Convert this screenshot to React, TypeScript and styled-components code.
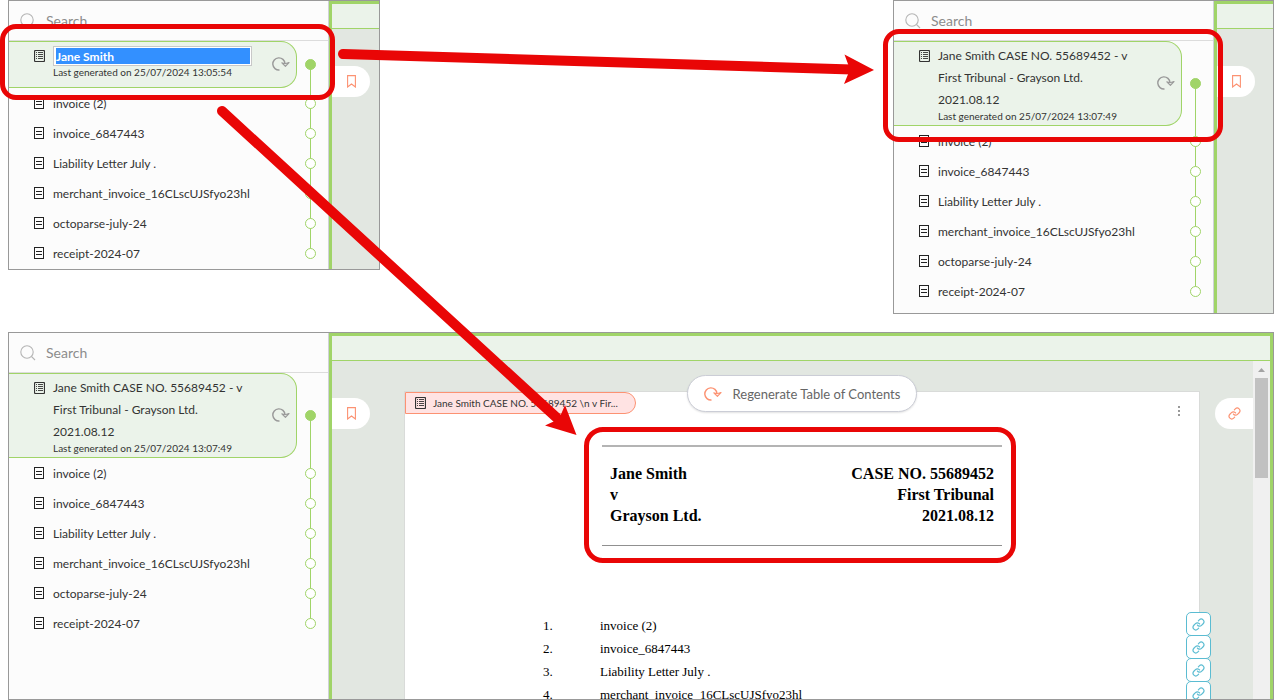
import React from "react";
import styled, { createGlobalStyle, css } from "styled-components";

const GREEN = "#a0d468";
const RED = "#e90606";
const UI_FONT = 'Lato, "Open Sans", sans-serif';

const GlobalStyle = createGlobalStyle`
  *, *::before, *::after { box-sizing: border-box; }
  body { margin: 0; background: #fff; font-family: ${UI_FONT}; font-size: 12px; color: #333; }
  button, input { font: inherit; color: inherit; }
  ul, ol { list-style: none; margin: 0; padding: 0; }
  svg { display: block; }
`;

const Page = styled.main`
  position: relative;
  display: flex;
  flex-direction: column;
  gap: 18px;
  height: 100vh;
  min-height: 600px;
  padding-left: 8px;
  overflow: hidden;
`;

const TopRow = styled.div`
  display: flex;
  justify-content: space-between;
  align-items: flex-start;
`;

const Panel = styled.section<{ $grow?: boolean; $main?: number }>`
  position: relative;
  display: grid;
  grid-template-columns: 320px ${(p) => (p.$main ? `${p.$main}px` : "minmax(0, 1fr)")};
  border: 1px solid #999;
  ${(p) =>
    p.$grow &&
    css`
      flex: 1;
      min-height: 0;
      grid-template-rows: minmax(0, 1fr);
    `}
`;

const Sidebar = styled.aside<{ $end: number }>`
  border-right: 1px solid #cfd1d8;
  background: #fcfcfc;
  padding-bottom: ${(p) => p.$end}px;
`;

const SearchRow = styled.label`
  display: flex;
  align-items: center;
  gap: 10px;
  height: 40px;
  padding-left: 11px;
  border-bottom: 1px solid #dcdcdc;
`;

const SearchInput = styled.input`
  width: 200px;
  border: 0;
  padding: 0;
  outline: 0;
  background: transparent;
  font-size: 14px;
  line-height: 20px;
  &::placeholder { color: #8c8c8c; opacity: 1; }
`;

const Entry = styled.li`
  display: flex;
`;

const Track = styled.span<{ $card?: boolean; $last?: boolean }>`
  position: relative;
  display: flex;
  align-items: center;
  justify-content: center;
  width: 27px;
  padding-top: ${(p) => (p.$card ? 0 : 1)}px;
  &::before {
    content: "";
    position: absolute;
    left: 13px;
    top: ${(p) => (p.$card ? "50%" : "0")};
    bottom: ${(p) => (p.$last ? "50%" : "0")};
    width: 1px;
    background: ${GREEN};
  }
`;

const Dot = styled.span<{ $filled?: boolean }>`
  position: relative;
  width: 11px;
  height: 11px;
  border: 1px solid ${GREEN};
  border-radius: 50%;
  background: ${(p) => (p.$filled ? GREEN : "#fff")};
`;

const Card = styled.div`
  display: flex;
  width: 288px;
  min-height: 47px;
  padding: 3px 6px 4px 25px;
  border: 1px solid ${GREEN};
  border-left: 0;
  border-radius: 0 16px 16px 0;
  background: #ebf3ea;
`;

const CardIcon = styled.span`
  width: 19px;
  padding-top: 5px;
`;

const CardBody = styled.div`
  width: 206px;
  flex: none;
  margin-right: auto;
`;

const CardTitle = styled.div`
  width: 200px;
  line-height: 22px;
`;

const Stamp = styled.div`
  font-size: 10px;
  line-height: 10px;
`;

const RenameInput = styled.input`
  display: block;
  width: 199px;
  height: 20px;
  margin: 1px 0;
  padding: 1px 1px 1px 2px;
  border: 1px solid #c8c8c8;
  outline: 0;
  background: linear-gradient(#3390ff, #3390ff) content-box, #fff;
  color: #fff;
  font-weight: 700;
`;

const IconButton = styled.button`
  align-self: center;
  padding: 0;
  border: 0;
  background: none;
  color: #999;
`;

const ItemLink = styled.a`
  display: flex;
  align-items: center;
  gap: 9px;
  width: 288px;
  height: 30px;
  padding-left: 25px;
  color: inherit;
  text-decoration: none;
  white-space: nowrap;
`;

const Main = styled.div<{ $closed?: boolean }>`
  display: flex;
  flex-direction: column;
  min-height: 0;
  overflow: hidden;
  border-top: 3px solid ${GREEN};
  border-left: 3px solid ${GREEN};
  border-right: ${(p) => (p.$closed ? `3px solid ${GREEN}` : "0")};
  background: #e2e7e1;
`;

const Band = styled.div`
  flex: none;
  height: 25px;
  border-bottom: 1px solid ${GREEN};
  background: #ebf3ea;
`;

const Workspace = styled.div`
  display: flex;
  align-items: stretch;
  flex: 1;
  min-height: 0;
`;

const SideTab = styled.button<{ $side: "left" | "right" }>`
  display: flex;
  flex: none;
  align-items: center;
  justify-content: center;
  width: 38px;
  height: 31px;
  margin-top: 37px;
  padding: 0;
  border: 0;
  border-radius: ${(p) => (p.$side === "left" ? "0 16px 16px 0" : "16px 0 0 16px")};
  background: #fff;
  color: #fc9272;
`;

const Sheet = styled.article`
  position: relative;
  flex: 1;
  margin: 30px 15px 0 34px;
  border: 1px solid #d9dbd9;
  border-bottom: 0;
  background: #fff;
  color: #000;
  font-family: "Liberation Serif", serif;
  font-size: 13px;
`;

const SheetTop = styled.div`
  display: flex;
  justify-content: space-between;
  align-items: flex-start;
  height: 53px;
  padding-right: 16px;
`;

const SheetTab = styled.div`
  display: flex;
  align-items: center;
  gap: 7px;
  width: 231px;
  height: 22px;
  padding-left: 9px;
  border: 1px solid #fc9272;
  border-radius: 0 11px 11px 0;
  background: #ffe3e3;
  color: #333;
  font-family: ${UI_FONT};
  font-size: 10px;
  white-space: nowrap;
`;

const KebabButton = styled.button`
  margin-top: 14px;
  padding: 0 3px;
  border: 0;
  background: none;
  color: #999;
`;

const Regenerate = styled.button`
  position: absolute;
  top: -17px;
  left: 50%;
  transform: translateX(-50%);
  display: flex;
  align-items: center;
  justify-content: center;
  gap: 11px;
  width: 230px;
  height: 37px;
  padding: 0;
  border: 1px solid #cbcdd6;
  border-radius: 19px;
  background: #fff;
  box-shadow: 0 1px 2px rgba(0, 0, 0, 0.12);
  color: #666;
  font-family: ${UI_FONT};
  white-space: nowrap;
  svg { color: #fc9272; }
`;

const CaseHeader = styled.header`
  position: relative;
  display: flex;
  justify-content: space-between;
  width: 400px;
  height: 101px;
  margin: 0 auto 68px;
  padding: 16px 8px 0;
  border-top: 2px solid #b4b4b4;
  border-bottom: 1px solid #909090;
  font-size: 16px;
  font-weight: 700;
  line-height: 21px;
`;

const Highlight = styled.div`
  position: absolute;
  inset: -20px -14px -18px -18px;
  border: 5px solid ${RED};
  border-radius: 19px;
  pointer-events: none;
`;

const Party = styled.div<{ $right?: boolean }>`
  text-align: ${(p) => (p.$right ? "right" : "left")};
`;

const Contents = styled.ol`
  width: 518px;
  margin: 0 auto;
`;

const ContentsItem = styled.li`
  display: grid;
  grid-template-columns: 57px 1fr;
  line-height: 23px;
`;

const LinkStack = styled.div`
  position: absolute;
  top: 220px;
  right: -12px;
  display: flex;
  flex-direction: column;
`;

const LinkButton = styled.button`
  display: flex;
  align-items: center;
  justify-content: center;
  width: 25px;
  height: 24px;
  margin-bottom: -1px;
  padding: 0;
  border: 1px solid #5bbcd2;
  border-radius: 5px;
  background: #fff;
  color: #5bbcd2;
`;

const ScrollTrack = styled.div`
  display: flex;
  flex: none;
  flex-direction: column;
  align-items: center;
  gap: 6px;
  width: 17px;
  padding-top: 7px;
  background: #f0f0f0;
  color: #a3a3a3;
`;

const ScrollThumb = styled.div`
  width: 13px;
  height: 100px;
  background: #c1c1c1;
`;

const Callout = styled.div<{ $tall?: boolean }>`
  position: absolute;
  z-index: 1;
  left: ${(p) => (p.$tall ? -11 : -9)}px;
  top: ${(p) => (p.$tall ? 28 : 23)}px;
  width: ${(p) => (p.$tall ? 340 : 335)}px;
  height: ${(p) => (p.$tall ? 113 : 76)}px;
  border: 5px solid ${RED};
  border-radius: 16px;
  pointer-events: none;
`;

const Arrows = styled.svg`
  position: absolute;
  top: 0;
  left: 0;
  z-index: 2;
  pointer-events: none;
`;

const SearchIcon = () => (
  <svg width="16" height="16" viewBox="0 0 16 16" fill="none" stroke="#b5b5b5" strokeWidth="1.1">
    <circle cx="7" cy="7" r="6.2" />
    <path d="M11.5 11.5 15 15" />
  </svg>
);

const FileIcon = () => (
  <svg width="10" height="12" viewBox="0 0 10 12" fill="none" stroke="#222" shapeRendering="crispEdges">
    <rect x="0.5" y="0.5" width="9" height="11" />
    <path d="M2 4.5h6M2 7.5h6" />
  </svg>
);

const TocIcon = () => (
  <svg width="11" height="12" viewBox="0 0 11 12" fill="none" stroke="#333">
    <rect x="0.5" y="0.5" width="10" height="11" rx="1" strokeWidth="1.2" />
    <path d="M2 2.5h1M4 2.5h5M2 4.5h1M4 4.5h5M2 6.5h1M4 6.5h5M2 8.5h1M4 8.5h5" strokeWidth="0.9" />
  </svg>
);

const RefreshIcon = () => (
  <svg width="18" height="16" viewBox="0 0 18 16" fill="none" stroke="currentColor" strokeWidth="1.4">
    <path d="M7.5 14A6.1 6.1 0 1 1 13 7.6" />
    <path d="M9.8 6.9 13.4 10.3 17 6.5 13 7.8Z" strokeWidth="1.1" strokeLinejoin="round" />
  </svg>
);

const BookmarkIcon = () => (
  <svg width="9" height="13" viewBox="0 0 9 13" fill="none" stroke="currentColor" strokeWidth="1.1">
    <path d="M0.6 0.6H8.4V12L4.5 9 0.6 12Z" />
  </svg>
);

const ChainIcon = () => (
  <svg
    width="13"
    height="13"
    viewBox="0 0 24 24"
    fill="none"
    stroke="currentColor"
    strokeWidth="2.2"
    strokeLinecap="round"
    strokeLinejoin="round"
  >
    <path d="M10 13a5 5 0 0 0 7.54.54l3-3a5 5 0 0 0-7.07-7.07l-1.72 1.71" />
    <path d="M14 11a5 5 0 0 0-7.54-.54l-3 3a5 5 0 0 0 7.07 7.07l1.71-1.71" />
  </svg>
);

const KebabIcon = () => (
  <svg width="2" height="11" viewBox="0 0 2 11" fill="currentColor">
    <path d="M0 0h2v2H0zM0 4h2v2H0zM0 8h2v2H0z" />
  </svg>
);

const files = [
  "invoice (2)",
  "invoice_6847443",
  "Liability Letter July .",
  "merchant_invoice_16CLscUJSfyo23hl",
  "octoparse-july-24",
  "receipt-2024-07",
];

const FileSidebar = ({ editing, end = 0 }: { editing?: boolean; end?: number }) => (
  <Sidebar $end={end}>
    <SearchRow>
      <SearchIcon />
      <SearchInput type="text" placeholder="Search" aria-label="Search" />
    </SearchRow>
    <ul>
      <Entry>
        <Card>
          <CardIcon>
            <TocIcon />
          </CardIcon>
          <CardBody>
            {editing ? (
              <RenameInput type="text" defaultValue="Jane Smith" aria-label="Document title" />
            ) : (
              <CardTitle>
                Jane Smith CASE NO. 55689452 - v
                <br />
                First Tribunal - Grayson Ltd.
                <br />
                2021.08.12
              </CardTitle>
            )}
            <Stamp>Last generated on 25/07/2024 {editing ? "13:05:54" : "13:07:49"}</Stamp>
          </CardBody>
          <IconButton type="button" aria-label="Regenerate">
            <RefreshIcon />
          </IconButton>
        </Card>
        <Track $card>
          <Dot $filled />
        </Track>
      </Entry>
      {files.map((name, i) => (
        <Entry key={name}>
          <ItemLink href="#">
            <FileIcon />
            {name}
          </ItemLink>
          <Track $last={i === files.length - 1}>
            <Dot />
          </Track>
        </Entry>
      ))}
    </ul>
  </Sidebar>
);

const BookmarkTab = () => (
  <SideTab type="button" $side="left" aria-label="Bookmarks">
    <BookmarkIcon />
  </SideTab>
);

const PreviewStrip = () => (
  <Main>
    <Band />
    <Workspace>
      <BookmarkTab />
    </Workspace>
  </Main>
);

export default function App() {
  return (
    <>
      <GlobalStyle />
      <Page>
        <TopRow>
          <Panel $main={50}>
            <FileSidebar editing end={1} />
            <PreviewStrip />
            <Callout />
          </Panel>
          <Panel $main={59}>
            <FileSidebar end={7} />
            <PreviewStrip />
            <Callout $tall />
          </Panel>
        </TopRow>

        <Panel $grow>
          <FileSidebar />
          <Main $closed>
            <Band />
            <Workspace>
              <BookmarkTab />
              <Sheet>
                <SheetTop>
                  <SheetTab>
                    <TocIcon />
                    Jane Smith CASE NO. 55689452 \n v Fir...
                  </SheetTab>
                  <KebabButton type="button" aria-label="More options">
                    <KebabIcon />
                  </KebabButton>
                </SheetTop>
                <Regenerate type="button">
                  <RefreshIcon />
                  Regenerate Table of Contents
                </Regenerate>
                <CaseHeader>
                  <Party>
                    Jane Smith
                    <br />v<br />
                    Grayson Ltd.
                  </Party>
                  <Party $right>
                    CASE NO. 55689452
                    <br />
                    First Tribunal
                    <br />
                    2021.08.12
                  </Party>
                  <Highlight />
                </CaseHeader>
                <Contents>
                  {files.slice(0, 4).map((name, i) => (
                    <ContentsItem key={name}>
                      <span>{i + 1}.</span>
                      <span>{name}</span>
                    </ContentsItem>
                  ))}
                </Contents>
                <LinkStack>
                  {files.slice(0, 4).map((name) => (
                    <LinkButton key={name} type="button" aria-label={`Link ${name}`}>
                      <ChainIcon />
                    </LinkButton>
                  ))}
                </LinkStack>
              </Sheet>
              <SideTab type="button" $side="right" aria-label="Links">
                <ChainIcon />
              </SideTab>
              <ScrollTrack>
                <svg width="7" height="4" viewBox="0 0 7 4" fill="currentColor">
                  <path d="M0 4 3.5 0 7 4Z" />
                </svg>
                <ScrollThumb />
              </ScrollTrack>
            </Workspace>
          </Main>
        </Panel>

        <Arrows width="880" height="440" viewBox="0 0 880 440" fill={RED} stroke={RED}>
          <path d="M343 54 852 69.5" strokeWidth="10" strokeLinecap="round" />
          <path d="M874 70 844.5 54.5 850 69.5 844 84Z" stroke="none" />
          <path d="M222 111 557 418" strokeWidth="10" strokeLinecap="round" />
          <path d="M576.5 435 565 405 559 419 545 425.5Z" stroke="none" />
        </Arrows>
      </Page>
    </>
  );
}
